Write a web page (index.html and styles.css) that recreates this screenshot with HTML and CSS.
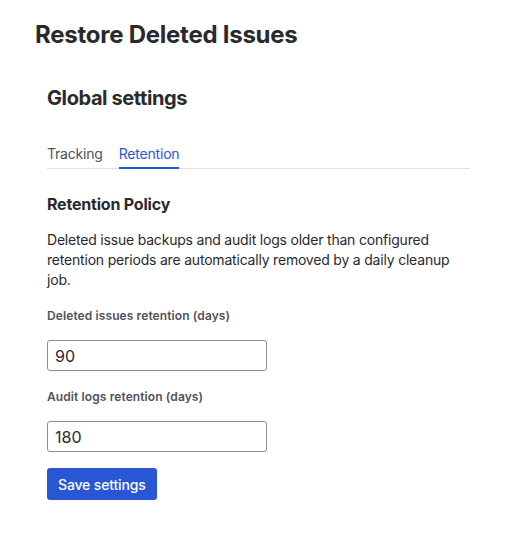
FILE: index.html
```html
<!DOCTYPE html>
<html>
<head>
<meta charset="utf-8">
<link rel="stylesheet" href="styles.css">
</head>
<body>
<div class="page">
  <h1 class="title">Restore Deleted Issues</h1>
  <section class="panel">
    <h2 class="panel-title">Global settings</h2>
    <nav class="tabs">
      <span class="tab">Tracking</span>
      <span class="tab active">Retention</span>
    </nav>
    <h3 class="section-title">Retention Policy</h3>
    <p class="desc">Deleted issue backups and audit logs older than configured retention periods are automatically removed by a daily cleanup job.</p>
    <div class="field">
      <label class="label">Deleted issues retention (days)</label>
      <input class="input" type="text" value="90">
    </div>
    <div class="field">
      <label class="label">Audit logs retention (days)</label>
      <input class="input" type="text" value="180">
    </div>
    <button class="btn">Save settings</button>
  </section>
</div>
</body>
</html>
```
FILE: styles.css
```css
* { box-sizing: border-box; }
body {
  margin: 0;
  background: #fff;
  font-family: Inter, "Liberation Sans", sans-serif;
  color: #292a2e;
}
.page {
  padding: 20px 35px;
}
.title {
  margin: 0;
  font-size: 24px;
  line-height: 30px;
  font-weight: 700;
  letter-spacing: -0.25px;
}
.panel {
  padding: 0 13px 0 12px;
  margin-top: 36px;
  display: flex;
  flex-direction: column;
  align-items: flex-start;
}
.panel-title {
  margin: 0;
  font-size: 20px;
  line-height: 24px;
  font-weight: 700;
  letter-spacing: -0.4px;
}
.tabs {
  align-self: stretch;
  display: flex;
  gap: 16px;
  margin-top: 32px;
  border-bottom: 1px solid #dcdfe4;
}
.tab {
  font-size: 14px;
  line-height: 20px;
  padding: 2px 0 3px;
  color: #505258;
  margin-bottom: -1px;
  border-bottom: 2px solid transparent;
  letter-spacing: -0.2px;
}
.tab.active {
  color: #2957d4;
  border-bottom-color: #2957d4;
}
.section-title {
  margin: 25px 0 0;
  font-size: 16px;
  line-height: 20px;
  font-weight: 700;
  letter-spacing: -0.2px;
}
.desc {
  margin: 16px 0 0;
  font-size: 14px;
  line-height: 20px;
  letter-spacing: -0.2px;
}
.field {
  display: flex;
  flex-direction: column;
  align-items: flex-start;
}
.label {
  margin-top: 18px;
  font-size: 12px;
  line-height: 16px;
  font-weight: 600;
  color: #505258;
  letter-spacing: 0.1px;
}
.input {
  margin-top: 16px;
  width: 220px;
  height: 31px;
  border: 1px solid #8c8f97;
  border-radius: 3px;
  padding: 0 7px;
  font-family: inherit;
  font-size: 16px;
  color: #292a2e;
}
.btn {
  margin-top: 16px;
  height: 32px;
  padding: 0 11px;
  border: none;
  border-radius: 3px;
  background: #2957d4;
  color: #fff;
  font-family: inherit;
  font-size: 14px;
  font-weight: 500;
  letter-spacing: -0.15px;
}
```
